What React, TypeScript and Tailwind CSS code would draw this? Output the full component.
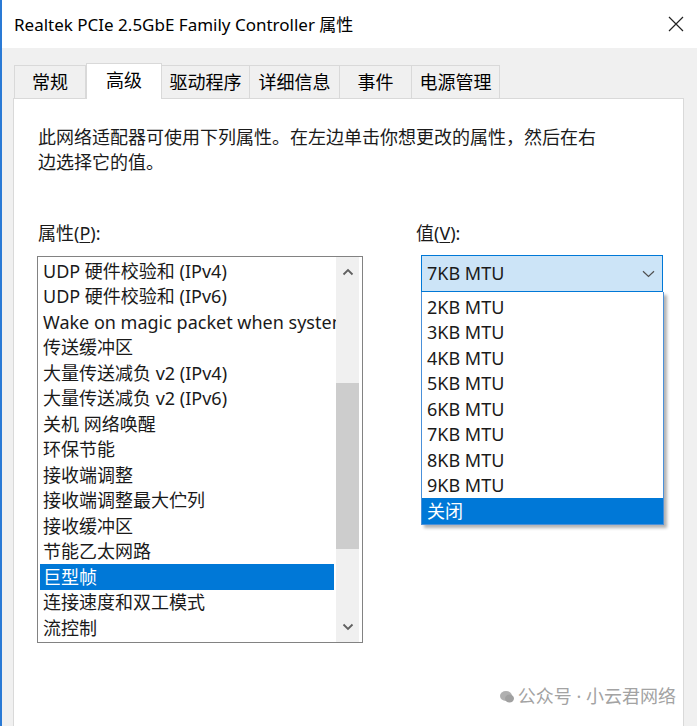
import React from "react";

const FONT = { fontFamily: '"Noto Sans", "Noto Sans CJK SC", sans-serif' };

const props = [
  "UDP 硬件校验和 (IPv4)",
  "UDP 硬件校验和 (IPv6)",
  "Wake on magic packet when system is in the S0ix power state",
  "传送缓冲区",
  "大量传送减负 v2 (IPv4)",
  "大量传送减负 v2 (IPv6)",
  "关机 网络唤醒",
  "环保节能",
  "接收端调整",
  "接收端调整最大伫列",
  "接收缓冲区",
  "节能乙太网路",
  "巨型帧",
  "连接速度和双工模式",
  "流控制",
];

const values = ["2KB MTU", "3KB MTU", "4KB MTU", "5KB MTU", "6KB MTU", "7KB MTU", "8KB MTU", "9KB MTU", "关闭"];

const tabs = ["常规", "高级", "驱动程序", "详细信息", "事件", "电源管理"];
const tabWidths = ["w-[72px]", "w-[76px]", "w-[88px]", "w-[90px]", "w-[72px]", "w-[88px]"];

function Chevron({ up = false }: { up?: boolean }) {
  return (
    <svg width="12" height="8" viewBox="0 0 12 8" className="block">
      <path
        d={up ? "M1.5 6.5 L6 2 L10.5 6.5" : "M1.5 1.5 L6 6 L10.5 1.5"}
        fill="none"
        stroke="#606060"
        strokeWidth="1.8"
      />
    </svg>
  );
}

function PropertyList() {
  return (
    <div className="flex h-[387px] w-[326px] border border-[#828282] bg-white">
      <div className="flex w-[298px] flex-col overflow-hidden pt-[1px]">
        {props.map((p, i) => (
          <div
            key={p}
            className={
              i === 12
                ? "mx-[2px] flex h-[25.5px] shrink-0 items-center whitespace-nowrap bg-[#0078d7] pl-[3px] leading-[22px] text-white"
                : "mx-[2px] flex h-[25.5px] shrink-0 items-center whitespace-nowrap pl-[3px] leading-[22px] text-[#1a1a1a]"
            }
          >
            {p}
          </div>
        ))}
      </div>
      <div className="flex w-[23px] flex-col bg-[#f0f0f0]">
        <div className="flex h-[30px] shrink-0 items-center justify-center">
          <Chevron up />
        </div>
        <div className="h-[96px] shrink-0" />
        <div className="h-[166px] shrink-0 bg-[#cdcdcd]" />
        <div className="flex-1" />
        <div className="flex h-[30px] shrink-0 items-center justify-center">
          <Chevron />
        </div>
      </div>
    </div>
  );
}

function ValueCombo() {
  return (
    <div className="relative ml-[5px] w-[242px]">
      <div className="flex h-[37px] items-center justify-between border border-[#0078d7] bg-[#cce4f7] pl-[5px] pr-[7px] text-[#1a1a1a]">
        <span>7KB MTU</span>
        <svg width="13" height="8" viewBox="0 0 13 8">
          <path d="M1 1.2 L6.5 6.5 L12 1.2" fill="none" stroke="#505050" strokeWidth="1.2" />
        </svg>
      </div>
      <div className="absolute left-0 top-[37px] z-10 w-[243px] border border-t-0 border-[#4a90d9] bg-white pt-[2px] shadow-[3px_3px_3px_rgba(0,0,0,0.3)]">
        {values.map((v, i) => (
          <div
            key={v}
            className={
              i === values.length - 1
                ? "flex h-[25.5px] items-center bg-[#0078d7] pl-[5px] leading-[22px] text-white"
                : "flex h-[25.5px] items-center pl-[5px] leading-[22px] text-[#1a1a1a]"
            }
          >
            {v}
          </div>
        ))}
      </div>
    </div>
  );
}

export default function App() {
  return (
    <div
      className="relative flex h-[726px] w-[697px] flex-col overflow-hidden border-l-2 border-[#2a7ad5] bg-[#f0f0f0] text-[18px] leading-[25px]"
      style={FONT}
    >
      <div className="flex h-[48px] shrink-0 items-center justify-between bg-white pl-[12px] pr-[13px] text-[17px] text-black">
        <span>Realtek PCIe 2.5GbE Family Controller 属性</span>
        <svg width="16" height="16" viewBox="0 0 16 16">
          <path d="M1 1 L15 15 M15 1 L1 15" stroke="#222" strokeWidth="1.2" />
        </svg>
      </div>

      <div className="mt-[15px] flex h-[35px] shrink-0 items-end pl-[12px]">
        {tabs.map((t, i) => (
          <div
            key={t}
            className={
              i === 1
                ? "relative z-10 -mb-[1px] flex h-[36px] w-[76px] items-start justify-center border border-b-0 border-[#d9d9d9] bg-white pt-[4px] text-black"
                : `flex h-[33px] ${tabWidths[i]} items-center justify-center border border-b-0 border-[#d9d9d9] bg-[#f0f0f0] text-black ${
                    i === 0 ? "" : "border-l-0"
                  }`
            }
          >
            {t}
          </div>
        ))}
      </div>

      <div className="ml-[11px] flex w-[671px] flex-1 flex-col border border-b-0 border-[#d9d9d9] bg-white pl-[23px] pt-[26px] text-[#1a1a1a]">
        <p className="ml-[1px] w-[566px]">
          此网络适配器可使用下列属性。在左边单击你想更改的属性，然后在右边选择它的值。
        </p>

        <div className="mt-[46px] flex">
          <div className="flex flex-col">
            <div className="ml-[1px] h-[25px]">
              属性(<span className="underline underline-offset-2">P</span>):
            </div>
            <div className="mt-[10px]">
              <PropertyList />
            </div>
          </div>
          <div className="ml-[53px] flex flex-col">
            <div className="h-[25px]">
              值(<span className="underline underline-offset-2">V</span>):
            </div>
            <div className="mt-[9px]">
              <ValueCombo />
            </div>
          </div>
        </div>
      </div>

      <div className="absolute bottom-[17px] right-[21px] flex items-center gap-[4px] text-[18px] text-[#a3a3a3]">
        <svg width="14" height="12" viewBox="0 0 14 12">
          <ellipse cx="6" cy="5" rx="6" ry="5" fill="#b0b0b0" />
          <ellipse cx="9.5" cy="7.5" rx="4.5" ry="4" fill="#a0a0a0" />
        </svg>
        <span>公众号 · 小云君网络</span>
      </div>
    </div>
  );
}
